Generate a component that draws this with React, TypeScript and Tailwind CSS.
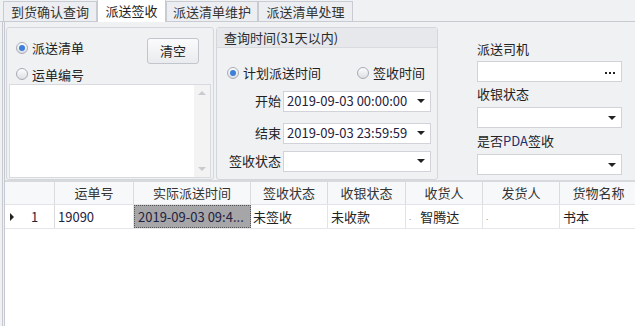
import React from "react";

const font = { fontFamily: '"Microsoft YaHei", "Noto Sans CJK SC", "Noto Sans", sans-serif' };

function Radio({ checked, label }: { checked?: boolean; label: string }) {
  return (
    <div className="flex items-center gap-[4px]">
      <span className="w-[12px] h-[12px] rounded-full border border-[#a7abb3] bg-gradient-to-b from-[#fdfdfd] to-[#dcdfe4] flex items-center justify-center">
        {checked && <span className="w-[6px] h-[6px] rounded-full bg-[#3d7fd9]" />}
      </span>
      <span>{label}</span>
    </div>
  );
}

function Combo({ value, w, dots }: { value?: string; w: string; dots?: boolean }) {
  return (
    <div className={`${w} h-[21px] bg-white border border-[#d1d3d8] flex items-center pl-[3px] pr-[5px]`}>
      <span className="flex-1 text-[#1f2240] whitespace-nowrap">{value}</span>
      {dots ? (
        <span className="flex gap-[2px] pr-[1px] pt-[3px]">
          <span className="w-[2px] h-[2px] bg-[#222]" />
          <span className="w-[2px] h-[2px] bg-[#222]" />
          <span className="w-[2px] h-[2px] bg-[#222]" />
        </span>
      ) : (
        <span className="w-0 h-0 border-l-[4px] border-r-[4px] border-t-[4px] border-l-transparent border-r-transparent border-t-[#222]" />
      )}
    </div>
  );
}

const tabs = ["到货确认查询", "派送签收", "派送清单维护", "派送清单处理"];
const tabW = ["w-[94px]", "w-[69px]", "w-[92px]", "w-[95px]"];

const cols = [
  { t: "", w: "w-[50px]" },
  { t: "运单号", w: "w-[79px]" },
  { t: "实际派送时间", w: "w-[117px]" },
  { t: "签收状态", w: "w-[77px]" },
  { t: "收银状态", w: "w-[78px]" },
  { t: "收货人", w: "w-[77px]" },
  { t: "发货人", w: "w-[77px]" },
  { t: "货物名称", w: "w-[78px]" },
];

export default function App() {
  return (
    <div className="w-[635px] h-[326px] bg-[#f0f1f3] text-[13px] text-[#222] overflow-hidden flex flex-col" style={font}>
      {/* tabs */}
      <div className="h-[22px] flex items-end pl-[3px] border-b border-[#c8cbd1]">
        {tabs.map((t, i) =>
          i === 1 ? (
            <div key={t} className={`${tabW[i]} h-[23px] -mb-px bg-white border border-b-0 border-[#c8cbd1] flex items-center justify-center`}>
              {t}
            </div>
          ) : (
            <div key={t} className={`${tabW[i]} h-[20px] bg-[#eceef1] border border-b-0 border-[#c8cbd1] flex items-center justify-center text-[#333]`}>
              {t}
            </div>
          )
        )}
      </div>

      <div className="flex-1 flex flex-col border-l-[3px] border-double border-[#c6c9cf] ml-[2px]">
        {/* top panel */}
        <div className="h-[158px] flex gap-[2px] pt-[5px] pl-[1px]">
          {/* left group */}
          <div className="w-[208px] h-[153px] border border-[#d3d6db] rounded-[3px] flex flex-col">
            <div className="h-[56px] flex justify-between pl-[9px] pr-[14px] pt-[6px]">
              <div className="flex flex-col gap-[7px] pt-[4px]">
                <Radio checked label="派送清单" />
                <Radio label="运单编号" />
              </div>
              <div className="w-[52px] h-[26px] mt-[4px] border border-[#c2c5cc] rounded-[3px] bg-gradient-to-b from-[#fbfbfc] to-[#e9ebee] flex items-center justify-center">
                清空
              </div>
            </div>
            <div className="mx-[2px] mb-[1px] flex-1 bg-white border border-[#d8dadf] flex justify-end">
              <div className="w-[16px] bg-[#f3f3f4] flex flex-col items-center justify-between py-[6px]">
                <span className="w-0 h-0 border-l-[4px] border-r-[4px] border-b-[4px] border-l-transparent border-r-transparent border-b-[#c9cbd0]" />
                <span className="w-0 h-0 border-l-[4px] border-r-[4px] border-t-[4px] border-l-transparent border-r-transparent border-t-[#c9cbd0]" />
              </div>
            </div>
          </div>

          {/* middle group */}
          <div className="w-[222px] h-[153px] border border-[#d3d6db] rounded-[3px] flex flex-col">
            <div className="h-[20px] bg-[#e6e8eb] border-b border-[#d9dbdf] flex items-center pl-[7px] text-[#2a2a2a]">
              查询时间(31天以内)
            </div>
            <div className="flex justify-between items-center pl-[10px] pr-[12px] mt-[15px]">
              <Radio checked label="计划派送时间" />
              <Radio label="签收时间" />
            </div>
            <div className="flex flex-col pl-[9px] mt-[8px]">
              <div className="flex items-center justify-end pr-[6px] gap-[2px]">
                <span>开始</span>
                <Combo w="w-[148px]" value="2019-09-03 00:00:00" />
              </div>
              <div className="flex items-center justify-end pr-[6px] gap-[2px] mt-[11px]">
                <span>结束</span>
                <Combo w="w-[148px]" value="2019-09-03 23:59:59" />
              </div>
              <div className="flex items-center justify-end pr-[6px] gap-[2px] mt-[7px]">
                <span>签收状态</span>
                <Combo w="w-[148px]" />
              </div>
            </div>
          </div>

          {/* right */}
          <div className="flex-1 pl-[37px] pt-[14px] flex flex-col">
            <div className="h-[16px] leading-[16px]">派送司机</div>
            <div className="mt-[4px]">
              <Combo w="w-[145px]" dots />
            </div>
            <div className="h-[16px] leading-[16px] mt-[4px]">收银状态</div>
            <div className="mt-[5px]">
              <Combo w="w-[145px]" />
            </div>
            <div className="h-[16px] leading-[16px] mt-[5px]">
              是否<span className="text-[#23306b]">PDA</span>签收
            </div>
            <div className="mt-[5px]">
              <Combo w="w-[145px]" />
            </div>
          </div>
        </div>

        {/* grid */}
        <div className="flex-1 bg-white border-t-2 border-[#d7d9dd] flex flex-col">
          <div className="h-[23px] flex bg-[#f7f8f9] border-b border-[#e1e3e6]">
            {cols.map((c, i) => (
              <div key={i} className={`${c.w} shrink-0 flex items-center justify-center border-r border-[#d9dbdf] text-[#333]`}>
                {c.t}
              </div>
            ))}
          </div>
          <div className="h-[24px] flex border-b border-[#e4e6e9]">
            <div className="w-[50px] shrink-0 flex items-center border-r border-[#d9dbdf] pl-[5px]">
              <span className="w-0 h-0 border-t-[4px] border-b-[4px] border-l-[4px] border-t-transparent border-b-transparent border-l-[#222]" />
              <span className="ml-[17px] text-[#1f2240]">1</span>
            </div>
            <div className="w-[79px] shrink-0 flex items-center pl-[3px] border-r border-[#e1e3e6] text-[#1f2240]">19090</div>
            <div className="w-[117px] shrink-0 flex items-center pl-[3px] bg-[#a6a6a8] border border-dotted border-[#555] text-[#1f2240] whitespace-nowrap">
              2019-09-03 09:4...
            </div>
            <div className="w-[77px] shrink-0 flex items-center pl-[2px] border-r border-[#e1e3e6]">未签收</div>
            <div className="w-[78px] shrink-0 flex items-center pl-[3px] border-r border-[#e1e3e6]">未收款</div>
            <div className="w-[77px] shrink-0 flex items-center pl-[3px] border-r border-[#e1e3e6]">
              <span className="text-[8px] text-[#888] mr-[9px]">.</span>智腾达
            </div>
            <div className="w-[77px] shrink-0 flex items-center pl-[3px] border-r border-[#e1e3e6]">
              <span className="text-[8px] text-[#888]">.</span>
            </div>
            <div className="w-[78px] shrink-0 flex items-center pl-[3px]">书本</div>
          </div>
        </div>
      </div>
    </div>
  );
}
